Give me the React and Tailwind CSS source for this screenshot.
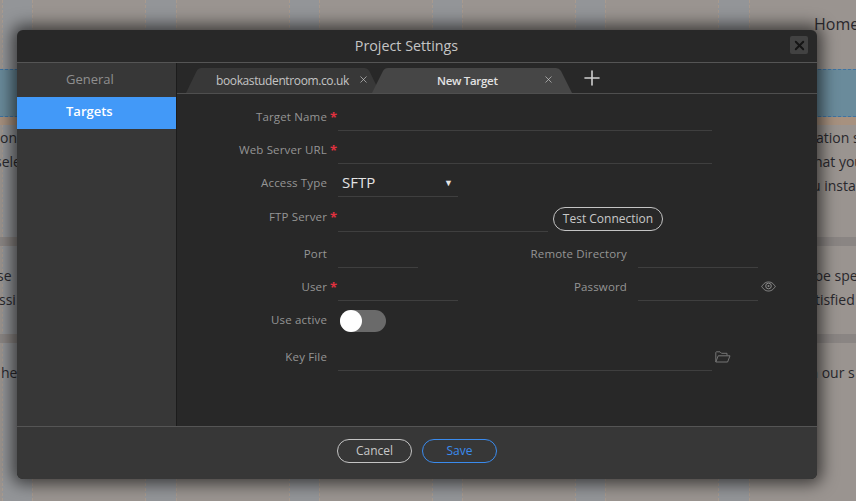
import { Plus, X } from "lucide-react";

const columns = [
  "w-[30px] ml-[2px]", "w-[113px]", "w-[31px]", "w-[113px]", "w-[30px]", "w-[113px]",
  "w-[30px]", "w-[113px]", "w-[30px]", "w-[113px]", "w-[31px]", "flex-1",
];

const BackgroundColumns = () => (
  <div className="absolute inset-0 flex">
    {columns.map((w, i) => (
      <div
        key={i}
        className={`${w} h-full border-l border-dashed border-[#a89a8e] ${
          i % 2 === 0 && i !== 11 ? "bg-[#939598]" : "bg-[#9a9490]"
        }`}
      ></div>
    ))}
  </div>
);

// leftClass holds the offset of the left text, rightClass where the right text starts
const TextLine = ({ left, right, leftClass = "", rightClass }) => (
  <div className="relative h-[24px] whitespace-nowrap text-[14px] leading-[24px] text-[#29282d]">
    <div className="flex">
      <span className={`shrink-0 ${leftClass}`}>{left}</span>
      <span className={`shrink-0 ${rightClass}`}>{right}</span>
    </div>
  </div>
);

const TabShape = ({ active }) => (
  <svg
    className="absolute inset-0"
    width="100%"
    height="25"
    viewBox="0 0 200 25"
    preserveAspectRatio="none"
  >
    <path
      d="M0 25 L11 3 Q12.5 0 16 0 L184 0 Q187 0 189 3 L200 25 Z"
      fill={active ? "#464646" : "#383838"}
    />
  </svg>
);

const Tab = ({ label, active, width, textClass, closeClass }) => (
  <div className={`relative h-[25px] ${width} ${active ? "z-10 -ml-[8px]" : ""}`}>
    <TabShape active={active} />
    <span
      className={`absolute top-[4px] leading-[17px] ${textClass} ${
        active
          ? "text-[11.5px] font-semibold tracking-[-0.3px] text-[#e2e2e2]"
          : "text-[12px] tracking-[-0.38px] text-[#c4c4c4]"
      }`}
    >
      {label}
    </span>
    <X
      size={11}
      strokeWidth={1.5}
      className={`absolute top-[6px] text-[#c8c8c8] ${closeClass}`}
    />
  </div>
);

const Label = ({ children, required }) => (
  <div className="flex items-center justify-end text-[11.5px] tracking-[0.15px] text-[#959595]">
    <span>{children}</span>
    <span className="flex w-[11px] justify-center pl-[2px] pt-[3px] text-[13px] font-bold leading-none text-[#e0313f]">
      {required ? "*" : ""}
    </span>
  </div>
);

const Input = ({ width }) => (
  <div className={`${width} h-full border-b border-[#3f3f3f]`}></div>
);

const Row = ({ label, required, height = "h-[33px]", labelClass = "pb-[6px]", children }) => (
  <div className={`flex ${height}`}>
    <div className={`flex w-[161px] shrink-0 items-end ${labelClass}`}>
      <div className="w-full">
        <Label required={required}>{label}</Label>
      </div>
    </div>
    {children}
  </div>
);

const EyeIcon = () => (
  <svg width="15" height="11" viewBox="0 0 15 11" fill="none" stroke="#8a8a8a" strokeWidth="1">
    <path d="M0.7 5.5 C3 2 5 1 7.5 1 C10 1 12 2 14.3 5.5 C12 9 10 10 7.5 10 C5 10 3 9 0.7 5.5 Z" />
    <circle cx="7.5" cy="5" r="2.8" />
    <circle cx="7.5" cy="5" r="1" fill="#8a8a8a" stroke="none" />
  </svg>
);

const FolderIcon = () => (
  <svg width="16" height="12" viewBox="0 0 16 12" fill="none" stroke="#757575" strokeWidth="1">
    <path d="M0.8 11 V1.5 Q0.8 0.8 1.5 0.8 H5 L6.5 2.3 H12 V4.5" />
    <path d="M0.8 11 L3.2 4.8 H15 L12.6 11 Z" />
  </svg>
);

export default function App() {
  return (
    <div className="relative h-[501px] w-[856px] overflow-hidden bg-[#9a9490] font-['Open_Sans',sans-serif]">
      <BackgroundColumns />

      {/* page behind the dialog */}
      <div className="relative flex h-full flex-col">
        <div className="flex h-[69px] justify-end pt-[12px] text-[16px] leading-[24px] text-[#29282d]">
          <span className="w-[42px]">Home</span>
        </div>
        <div className="h-[48px] border-y border-dashed border-[#3f73a3] bg-[#6a8b9b]"></div>
        <div className="h-[8px] bg-[#a7917f]"></div>
        <div className="pt-[1px]">
          <TextLine left="on" right="ation s" rightClass="ml-[799px]" />
          <TextLine left="sele" leftClass="-ml-[5px]" right="hat you" rightClass="ml-[793px]" />
          <TextLine right="u instal" rightClass="ml-[812px]" />
        </div>
        <div className="mt-[39px] h-[9px] bg-[#8a8583]"></div>
        <div className="pt-[18px]">
          <TextLine left="se" leftClass="-ml-[3px]" right="be spe" rightClass="ml-[803px]" />
          <TextLine left="ssi" leftClass="-ml-[1px]" right="tisfied" rightClass="ml-[799px]" />
        </div>
        <div className="mt-[22px] h-[9px] bg-[#8a8583]"></div>
        <div className="pt-[18px]">
          <TextLine left="he" leftClass="ml-[1px]" right="n our s" rightClass="ml-[792px]" />
        </div>
      </div>

      {/* dialog */}
      <div className="absolute left-[17px] top-[30px] flex h-[449px] w-[800px] flex-col overflow-hidden rounded-[6px] bg-[#282828] shadow-[0_0_16px_5px_rgba(0,0,0,0.6)]">
        <div className="relative flex h-[33px] shrink-0 items-center justify-center border-b border-[#555555] pb-[1px] pr-[21px]">
          <span className="text-[14.3px] text-[#c5c5c5]">Project Settings</span>
          <button className="absolute right-[9px] top-[6px] flex h-[18px] w-[18px] items-center justify-center rounded-[2px] bg-[#424242]">
            <X size={15} strokeWidth={3} className="text-[#151515]" />
          </button>
        </div>

        <div className="flex min-h-0 flex-1">
          {/* sidebar */}
          <div className="w-[160px] shrink-0 border-r border-[#1c1c1c] bg-[#373737] text-[13px]">
            <div className="h-[34px] pl-[49px] pt-[7px] leading-[18px] text-[#8f8f8f]">General</div>
            <div className="h-[32px] bg-[#4299f8] pl-[49px] pt-[5px] font-semibold leading-[18px] text-white">
              Targets
            </div>
          </div>

          {/* content */}
          <div className="min-w-0 flex-1">
            <div className="flex h-[31px] items-end border-b border-[#4f4f4f] pl-[9px]">
              <Tab
                label="bookastudentroom.co.uk"
                width="w-[194px]"
                textClass="left-[30px]"
                closeClass="left-[172px]"
              />
              <Tab
                active
                label="New Target"
                width="w-[200px]"
                textClass="left-[65px]"
                closeClass="left-[171px]"
              />
              <Plus size={24} strokeWidth={1.6} className="z-10 mb-[3px] ml-[8px] text-[#cfcfcf]" />
            </div>

            <div className="flex flex-col">
              <Row label="Target Name" required height="h-[37px]">
                <Input width="w-[374px]" />
              </Row>
              <Row label="Web Server URL" required>
                <Input width="w-[374px]" />
              </Row>
              <Row label="Access Type">
                <div className="flex h-full w-[120px] items-end justify-between border-b border-[#3f3f3f] pb-[2px] pl-[4px] pr-[5px]">
                  <span className="text-[15px] leading-[24px] text-[#e4e4e4]">SFTP</span>
                  <span className="mb-[5px] text-[9px] leading-[12px] text-[#e4e4e4]">▼</span>
                </div>
              </Row>
              <Row label="FTP Server" required height="h-[35px]" labelClass="pb-[7px]">
                <Input width="w-[210px]" />
                <button className="ml-[5px] mt-[10px] flex h-[24px] w-[110px] items-center justify-center rounded-full border border-[#c4c4c4] text-[12px] text-[#c8c8c8]">
                  Test Connection
                </button>
              </Row>
              <Row label="Port" height="h-[36px]">
                <Input width="w-[80px]" />
                <div className="flex w-[220px] items-end justify-end pb-[6px] pr-[11px] text-[11.5px] tracking-[0.15px] text-[#959595]">
                  Remote Directory
                </div>
                <Input width="w-[120px]" />
              </Row>
              <Row label="User" required>
                <Input width="w-[120px]" />
                <div className="flex w-[180px] items-end justify-end pb-[6px] pr-[11px] text-[11.5px] tracking-[0.15px] text-[#959595]">
                  Password
                </div>
                <Input width="w-[120px]" />
                <div className="ml-[3px] flex items-end pb-[9px]">
                  <EyeIcon />
                </div>
              </Row>
              <Row label="Use active" height="h-[34px]" labelClass="pb-[7px]">
                <div className="ml-[2px] mt-[9px] flex h-[22px] w-[46px] rounded-full bg-[#6a6a6a]">
                  <div className="h-[22px] w-[22px] rounded-full bg-white"></div>
                </div>
              </Row>
              <Row label="Key File" height="h-[36px]">
                <Input width="w-[374px]" />
                <div className="ml-[3px] flex items-end pb-[8px]">
                  <FolderIcon />
                </div>
              </Row>
            </div>
          </div>
        </div>

        <div className="flex h-[53px] shrink-0 justify-center gap-[10px] border-t border-[#555555] bg-[#373737] pt-[12px]">
          <button className="h-[24px] w-[75px] rounded-full border border-[#c4c4c4] text-[12px] text-[#c8c8c8]">
            Cancel
          </button>
          <button className="h-[24px] w-[75px] rounded-full border border-[#3a8bee] text-[12px] text-[#3a8bee]">
            Save
          </button>
        </div>
      </div>
    </div>
  );
}
